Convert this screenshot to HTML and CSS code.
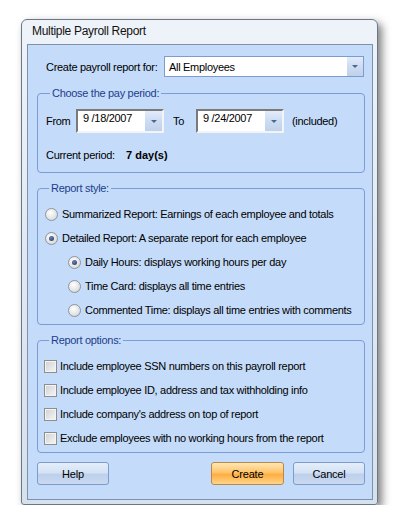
FILE: index.html
```html
<!DOCTYPE html>
<html lang="en">
<head>
    <meta charset="UTF-8">
    <meta name="viewport" content="width=device-width, initial-scale=1.0">
    <title>Multiple Payroll Report</title>
    <link rel="stylesheet" href="styles.css">
</head>
<body>
    <div class="window">
        <div class="titlebar">Multiple Payroll Report</div>
        <div class="client">
            <div class="for-row">
                <span class="for-label">Create payroll report for:</span>
                <div class="combo">
                    <span class="combo-text">All Employees</span>
                    <span class="drop"><i class="arrow"></i></span>
                </div>
            </div>

            <fieldset class="group period">
                <legend>Choose the pay period:</legend>
                <div class="date-row">
                    <span class="from-label">From</span>
                    <div class="date">
                        <span class="date-text">9 /18/2007</span>
                        <span class="drop"><i class="arrow"></i></span>
                    </div>
                    <span class="to-label">To</span>
                    <div class="date">
                        <span class="date-text">9 /24/2007</span>
                        <span class="drop"><i class="arrow"></i></span>
                    </div>
                    <span class="included">(included)</span>
                </div>
                <div class="current">
                    <span class="current-label">Current period:</span>
                    <b>7 day(s)</b>
                </div>
            </fieldset>

            <fieldset class="group style">
                <legend>Report style:</legend>
                <div class="option"><span class="radio"></span>Summarized Report: Earnings of each employee and totals</div>
                <div class="option"><span class="radio checked"></span>Detailed Report: A separate report for each employee</div>
                <div class="option sub"><span class="radio checked"></span>Daily Hours: displays working hours per day</div>
                <div class="option sub"><span class="radio"></span>Time Card: displays all time entries</div>
                <div class="option sub"><span class="radio"></span>Commented Time: displays all time entries with comments</div>
            </fieldset>

            <fieldset class="group options">
                <legend>Report options:</legend>
                <div class="option"><span class="check"></span>Include employee SSN numbers on this payroll report</div>
                <div class="option"><span class="check"></span>Include employee ID, address and tax withholding info</div>
                <div class="option"><span class="check"></span>Include company's address on top of report</div>
                <div class="option"><span class="check"></span>Exclude employees with no working hours from the report</div>
            </fieldset>

            <div class="buttons">
                <button class="btn help">Help</button>
                <button class="btn create">Create</button>
                <button class="btn cancel">Cancel</button>
            </div>
        </div>
    </div>
</body>
</html>
```

FILE: styles.css
```css
body {
    margin: 0;
    background: #fff;
    font-family: 'Liberation Sans', Arial, sans-serif;
    font-size: 11px;
    letter-spacing: -0.3px;
    color: #000;
}

.window {
    margin: 19px 0 0 21px;
    width: 355px;
    height: 484px;
    border: 1px solid #6b7788;
    border-radius: 6px 6px 3px 3px;
    background: linear-gradient(to bottom, #eef3f9, #dde7f2 60%, #d6e1ee);
    box-shadow: 4px 4px 9px rgba(0, 0, 0, 0.5);
    display: flex;
    flex-direction: column;
}

.titlebar {
    height: 24px;
    line-height: 22px;
    padding-left: 10px;
    font-size: 12px;
    letter-spacing: -0.3px;
    color: #111;
}

.client {
    flex: 1;
    margin: 0 4px 4px 5px;
    border: 1px solid #7f90a8;
    background: #c4dbf9;
    padding: 11px 7px 0 9px;
}

.for-row {
    display: flex;
    align-items: center;
    height: 21px;
}

.for-label {
    width: 118px;
    padding-left: 9px;
}

.combo {
    width: 198px;
    height: 19px;
    border: 1px solid #7c9bd1;
    background: #fff;
    display: flex;
    align-items: center;
}

.combo-text {
    flex: 1;
    padding-left: 4px;
}

.drop {
    width: 16px;
    height: 100%;
    background: linear-gradient(to bottom, #e3ecf9, #cddcf2 50%, #bfd1ec);
    display: flex;
    justify-content: center;
    align-items: center;
}

.arrow {
    width: 0;
    height: 0;
    border-left: 3px solid transparent;
    border-right: 3px solid transparent;
    border-top: 3px solid #4d6690;
}

.group {
    margin: 8px 0 0 0;
    padding: 7px 0 2px 7px;
    border: 1px solid #7b9cd6;
    border-radius: 4px;
    min-inline-size: 0;
}

.group legend {
    margin-left: 4px;
    padding: 0 2px;
    line-height: 14px;
    color: #1c3e8c;
}

.period {
    margin-top: 9px;
    padding: 9px 0 9px 8px;
}

.date-row {
    display: flex;
    align-items: center;
    height: 24px;
}

.from-label {
    width: 30px;
}

.to-label {
    width: 23px;
    margin-left: 9px;
}

.included {
    margin-left: 8px;
}

.date {
    width: 84px;
    height: 20px;
    border: 2px solid;
    border-color: #7a7a7a #f4f4f4 #f4f4f4 #7a7a7a;
    background: #fff;
    display: flex;
    align-items: center;
}

.date-text {
    flex: 1;
    padding-left: 5px;
    align-self: flex-start;
    line-height: 15px;
}

.date .drop {
    width: 17px;
}

.current {
    margin-top: 14px;
    height: 16px;
    line-height: 16px;
    display: flex;
}

.current-label {
    width: 80px;
}

.current b {
    letter-spacing: 0;
}

.option {
    height: 24px;
    display: flex;
    align-items: center;
}

.option.sub {
    padding-left: 23px;
}

.radio {
    width: 13px;
    height: 13px;
    box-sizing: border-box;
    border-radius: 50%;
    border: 1px solid #8f949a;
    background: radial-gradient(circle at 40% 35%, #ffffff, #e2e3e5 60%, #c9cbce);
    margin-right: 4px;
    display: flex;
    justify-content: center;
    align-items: center;
}

.radio.checked::after {
    content: '';
    width: 5px;
    height: 5px;
    border-radius: 50%;
    background: radial-gradient(circle at 40% 35%, #6a84ad, #1d3358);
}

.check {
    width: 13px;
    height: 13px;
    box-sizing: border-box;
    border: 1px solid #8c8e90;
    box-shadow: inset 0 0 0 1px #f4f4f4;
    background: linear-gradient(135deg, #cfd0d2, #f7f7f7);
    margin-left: -1px;
    margin-right: 3px;
}

.buttons {
    display: flex;
    margin-top: 9px;
}

.btn {
    height: 23px;
    width: 72px;
    font-family: inherit;
    font-size: 11px;
    letter-spacing: -0.2px;
    border: 1px solid #7d9ccb;
    border-radius: 3px;
    background: linear-gradient(to bottom, #e5eefa, #d4e2f4 45%, #bdd0ec 55%, #c9d9f0);
    color: #000;
    padding: 0;
}

.create {
    margin-left: auto;
    width: 73px;
    border-color: #b68a4c;
    background: linear-gradient(to bottom, #ffe7b4, #ffc46a 45%, #ffae40 55%, #ffd58a);
}

.cancel {
    margin-left: 9px;
}
```
